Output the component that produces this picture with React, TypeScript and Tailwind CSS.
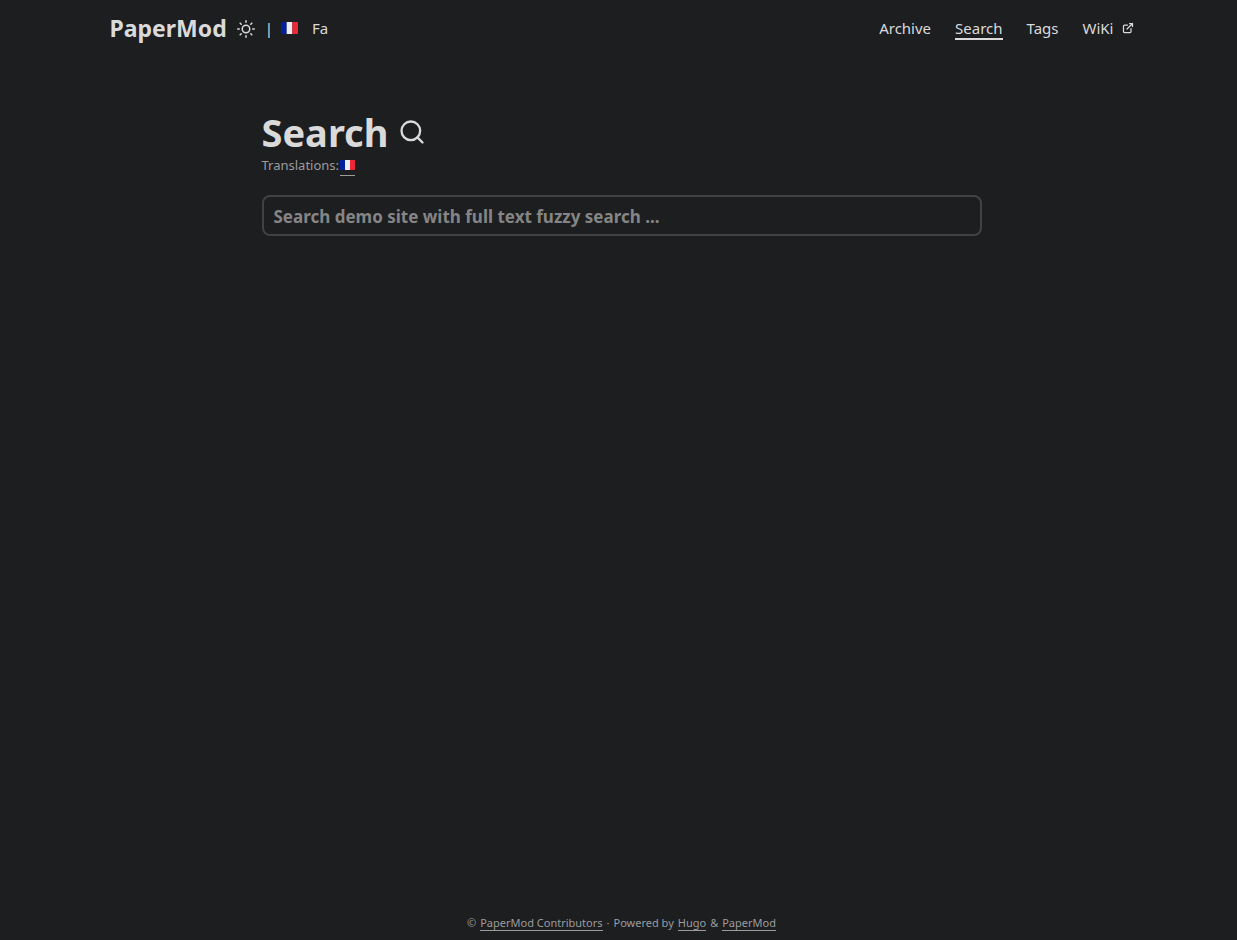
import React from "react";

function Flag({ className }: { className: string }) {
  return (
    <svg viewBox="0 0 18 12" preserveAspectRatio="none" className={className} role="img" aria-label="Français">
      <path fill="#00209f" d="M1 0h5v12H1a1 1 0 0 1-1-1V1a1 1 0 0 1 1-1z" />
      <path fill="#eee" d="M6 0h6v12H6z" />
      <path fill="#ed2939" d="M12 0h5a1 1 0 0 1 1 1v10a1 1 0 0 1-1 1h-5z" />
    </svg>
  );
}

const strokeProps = {
  fill: "none",
  stroke: "currentColor",
  strokeWidth: 2,
  strokeLinecap: "round" as const,
  strokeLinejoin: "round" as const,
  viewBox: "0 0 24 24",
  "aria-hidden": true,
};

function Header() {
  return (
    <header className="mx-auto flex w-full max-w-[1072px] flex-wrap justify-between px-6 text-[15px] leading-[56px]">
      <div className="flex items-center">
        <a href="#home" className="text-[23px] leading-[56px] font-bold">PaperMod</a>
        <button type="button" aria-label="Toggle theme" className="ml-2.5 pt-0.5">
          <svg {...strokeProps} className="h-[18px] w-[18px]">
            <circle cx="12" cy="12" r="5" />
            <path d="M12 1v2M12 21v2M4.22 4.22l1.42 1.42M18.36 18.36l1.42 1.42M1 12h2M21 12h2M4.22 19.78l1.42-1.42M18.36 5.64l1.42-1.42" />
          </svg>
        </button>
        <span className="ml-2.5">|</span>
        <a href="#fr" className="ml-2"><Flag className="h-3 w-[17px]" /></a>
        <a href="#fa" className="ml-3.5">Fa</a>
      </div>
      <nav className="flex items-center gap-6">
        <a href="#archive">Archive</a>
        <a href="#search" className="border-y-2 border-t-transparent border-b-current leading-[20px]">Search</a>
        <a href="#tags">Tags</a>
        <a href="#wiki" className="flex items-center gap-2">
          WiKi
          <svg {...strokeProps} strokeWidth={2.5} className="h-3 w-3">
            <path d="M18 13v6a2 2 0 0 1-2 2H5a2 2 0 0 1-2-2V8a2 2 0 0 1 2-2h6M15 3h6v6M10 14L21 3" />
          </svg>
        </a>
      </nav>
    </header>
  );
}

export default function App() {
  return (
    <div className="flex min-h-screen flex-col bg-[#1d1e20] pl-1.5 font-['Noto_Sans',sans-serif] text-[#dadadb]">
      <Header />
      <main className="mx-auto w-full max-w-[768px] grow px-6 pt-12">
        <h1 className="flex items-center gap-2.5 text-[38px] leading-[56px] font-bold">
          Search
          <svg {...strokeProps} className="h-7 w-7">
            <circle cx="11" cy="11" r="8" />
            <path d="M21 21l-4.35-4.35" />
          </svg>
        </h1>
        <div className="flex items-start gap-px text-[13px] leading-[11px] text-[#9b9c9d]">
          Translations:
          <a href="#fr" className="border-b border-current pb-[5px]"><Flag className="h-2.5 w-[15px]" /></a>
        </div>
        <input
          type="search"
          aria-label="Search"
          placeholder="Search demo site with full text fuzzy search ..."
          className="mt-[19px] h-[41px] w-full rounded-lg border-2 border-[#414244] px-2.5 pt-0.5 text-[17px] font-bold placeholder:text-[#858586]"
        />
      </main>
      <footer className="flex flex-wrap justify-center gap-x-1 px-6 pb-[9px] text-[11px] leading-[15px] text-[#9b9c9d]">
        <span>©</span>
        <a href="#contributors" className="border-b border-current">PaperMod Contributors</a>
        <span>·</span>
        <span>Powered by</span>
        <a href="#hugo" className="border-b border-current">Hugo</a>
        <span>&amp;</span>
        <a href="#papermod" className="border-b border-current">PaperMod</a>
      </footer>
    </div>
  );
}
